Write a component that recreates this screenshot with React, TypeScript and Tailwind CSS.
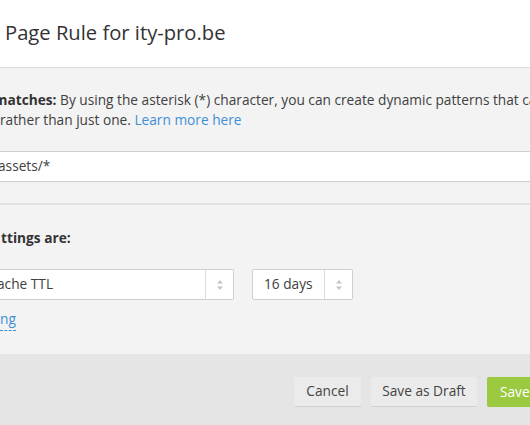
import React from "react";

function Arrows() {
  return (
    <svg width="8" height="12" viewBox="0 0 8 12" aria-hidden="true">
      <path d="M4 1 L7 4.5 L1 4.5 Z" fill="#c4c4c4" />
      <path d="M4 11 L7 7.5 L1 7.5 Z" fill="#c4c4c4" />
    </svg>
  );
}

export default function App() {
  return (
    <div
      className="w-[530px] h-[425px] overflow-hidden flex flex-col text-[#333]"
      style={{ fontFamily: '"Open Sans", "Noto Sans", sans-serif' }}
    >
      <div className="h-[68px] shrink-0 bg-white border-b border-[#dcdcdc] flex items-center">
        <h1 className="pl-[5px] text-[20.2px] leading-none text-[#333] whitespace-nowrap -mt-[2px]">
          Page Rule for ity-pro.be
        </h1>
      </div>

      <div className="shrink-0 bg-[#f3f3f3] pt-[22px] pb-[21px] border-b-2 border-[#e2e2e2]">
        <p className="text-[13.7px] leading-[20px] whitespace-nowrap text-[#404040]">
          <span className="-ml-[6px] font-bold text-[#333]">matches:</span> By using the asterisk (*)
          character, you can create dynamic patterns that can match many URLs
          <br />
          rather than just one.{" "}
          <a className="text-[#3f8fd8]">Learn more here</a>
        </p>
        <div className="mt-[21px] h-[31px] bg-white border-y border-[#cfcfcf] flex items-center">
          <span className="-ml-[2px] text-[13.7px] text-[#404040] whitespace-nowrap">
            assets/*
          </span>
        </div>
      </div>

      <div className="shrink-0 bg-[#f3f3f3] pt-[23px] pb-[21px]">
        <p className="text-[13.7px] leading-[20px] font-bold text-[#333] whitespace-nowrap ml-[1px]">
          ttings are:
        </p>
        <div className="mt-[21px] flex items-center">
          <div className="w-[234px] h-[31px] bg-white border-y border-r border-[#cfcfcf] rounded-r-[2px] flex">
            <div className="flex-1 flex items-center">
              <span className="-ml-[3px] text-[13.7px] text-[#404040] whitespace-nowrap">
                ache TTL
              </span>
            </div>
            <div className="w-[28px] border-l border-[#dcdcdc] flex items-center justify-center">
              <Arrows />
            </div>
          </div>
          <div className="ml-[18px] w-[101px] h-[31px] bg-white border border-[#cfcfcf] rounded-[2px] flex">
            <div className="flex-1 flex items-center pl-[11px]">
              <span className="text-[13.7px] text-[#404040] whitespace-nowrap">16 days</span>
            </div>
            <div className="w-[28px] border-l border-[#dcdcdc] flex items-center justify-center">
              <Arrows />
            </div>
          </div>
        </div>
        <div className="mt-[9px] h-[24px] flex items-start">
          <a className="text-[13.7px] leading-[20px] text-[#3f8fd8] border-b border-dashed border-[#3f8fd8] pb-[1px]">
            ng
          </a>
        </div>
      </div>

      <div className="flex-1 bg-[#e5e5e5] flex items-start pt-[23px] pl-[294px] gap-[10px]">
        <button className="shrink-0 h-[30px] w-[67px] bg-[#ebebeb] border-b border-[#cfcfcf] rounded-[2px] text-[13.7px] text-[#444]">
          Cancel
        </button>
        <button className="shrink-0 h-[30px] w-[106px] bg-[#ebebeb] border-b border-[#cfcfcf] rounded-[2px] text-[13.7px] text-[#444]">
          Save as Draft
        </button>
        <button className="shrink-0 h-[30px] w-[70px] bg-[#9bc93f] rounded-[2px] text-[13.7px] text-white text-left pl-[13px]">
          Save
        </button>
      </div>
    </div>
  );
}
